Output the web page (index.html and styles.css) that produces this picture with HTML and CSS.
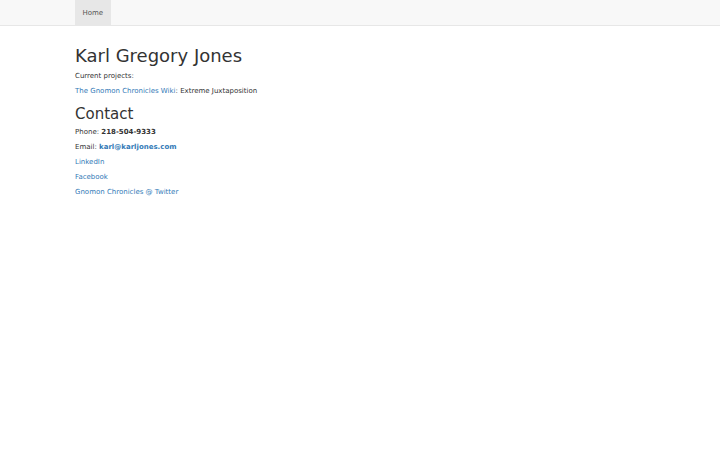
FILE: index.html
```html
<!DOCTYPE html>
<html lang="en">
<head>
    <meta charset="UTF-8">
    <meta name="viewport" content="width=device-width, initial-scale=1.0">
    <title>Karl Gregory Jones</title>
    <link rel="stylesheet" href="styles.css">
</head>
<body>
    <nav class="navbar">
        <div class="container">
            <ul class="nav">
                <li class="active"><a href="#">Home</a></li>
            </ul>
        </div>
    </nav>

    <div class="container">
        <h1>Karl Gregory Jones</h1>
        <p>Current projects:</p>
        <p><a href="#">The Gnomon Chronicles Wiki</a>: Extreme Juxtaposition</p>

        <h2>Contact</h2>
        <p>Phone: <strong>218-504-9333</strong></p>
        <p>Email: <a href="#"><strong>karl@karljones.com</strong></a></p>
        <p><a href="#">LinkedIn</a></p>
        <p><a href="#">Facebook</a></p>
        <p><a href="#">Gnomon Chronicles @ Twitter</a></p>
    </div>
</body>
</html>
```

FILE: styles.css
```css
body {
    font-family: "DejaVu Sans", sans-serif;
    font-size: 7px;
    line-height: 10px;
    color: #333;
    background: #fff;
    margin: 0;
    padding: 36px 0 0;
}

a {
    color: #337ab7;
    text-decoration: none;
}

.container {
    box-sizing: border-box;
    width: 585px;
    margin: 0 auto;
    padding: 0 7.5px;
}

/* fixed top bar, body padding keeps content below it */
.navbar {
    position: fixed;
    top: 0;
    left: 0;
    right: 0;
    background-color: #f8f8f8;
    border-bottom: 1px solid #e7e7e7;
    height: 25px;
}

.nav {
    list-style: none;
    margin: 0;
    padding: 0;
    display: flex;
}

.nav li a {
    display: block;
    padding: 7.5px 7.5px;
    line-height: 10px;
    color: #555;
}

.nav li.active a {
    background-color: #e7e7e7;
}

h1,
h2 {
    font-weight: 500;
    line-height: 1.1;
    margin: 10px 0 5px;
}

h1 {
    font-size: 18px;
}

h2 {
    font-size: 15px;
}

p {
    margin: 0 0 5px;
}
```
